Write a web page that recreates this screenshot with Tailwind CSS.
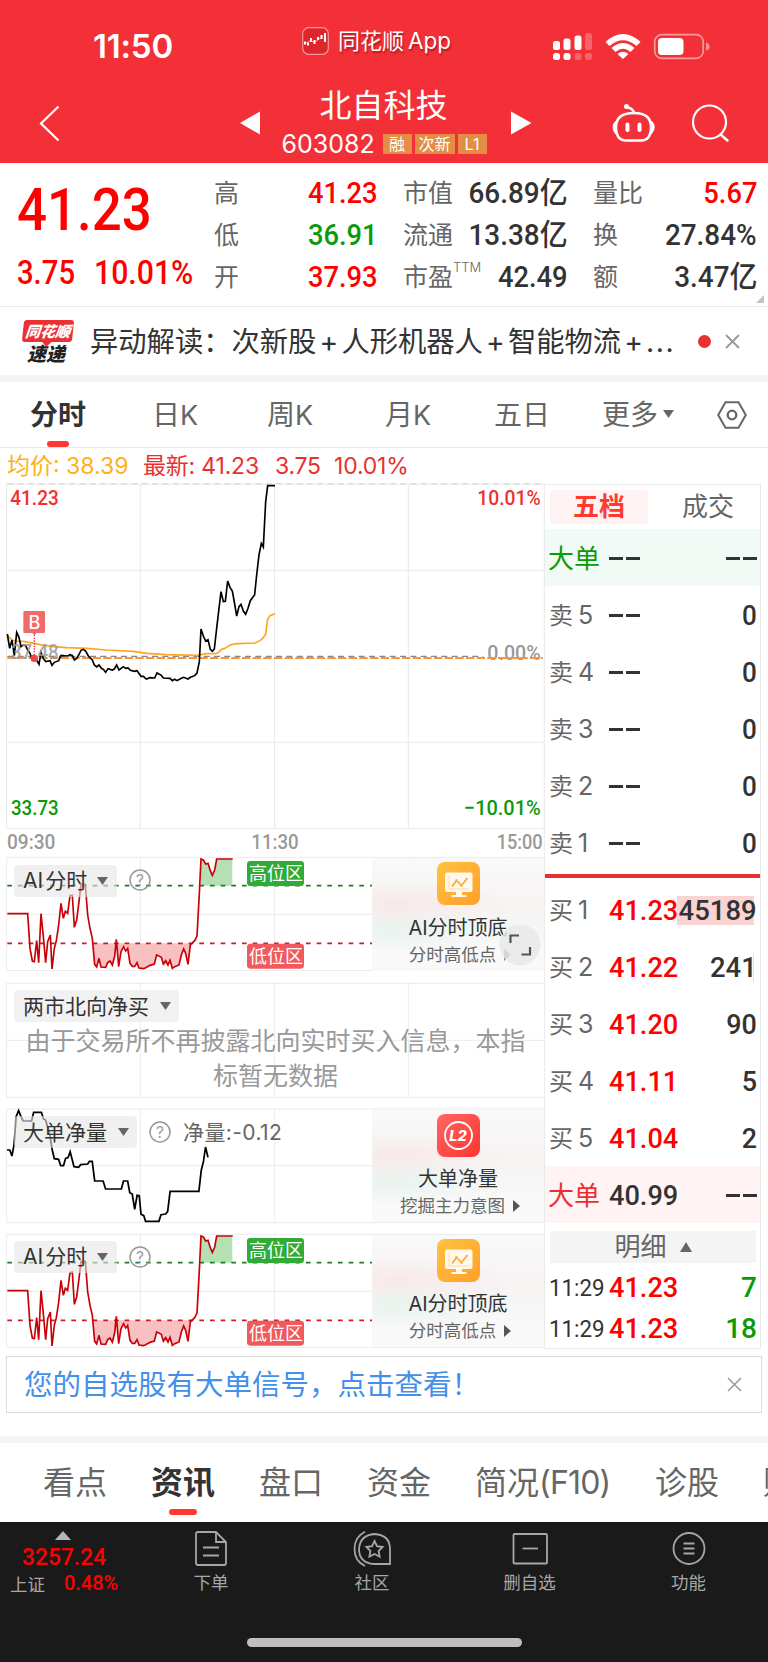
<!DOCTYPE html>
<html lang="zh-CN">
<head>
<meta charset="utf-8">
<title>北自科技 603082</title>
<script src="https://cdn.jsdelivr.net/npm/@tailwindcss/browser@4"></script>
</head>
<body class="w-[768px] h-[1662px] overflow-hidden bg-white font-['Inter','Noto_Sans_CJK_SC',sans-serif] text-[#666] leading-none whitespace-nowrap">

<!-- shared drawings -->
<svg class="absolute w-0 h-0" aria-hidden="true">
  <defs>
    <linearGradient id="amber" x1="0" y1="0" x2="1" y2="1"><stop offset="0" stop-color="#ffc340"/><stop offset="1" stop-color="#ff9f2a"/></linearGradient>
    <linearGradient id="coral" x1="0" y1="0" x2="1" y2="1"><stop offset="0" stop-color="#ff6663"/><stop offset="1" stop-color="#ff3530"/></linearGradient>
    <symbol id="ai-icon" viewBox="0 0 43 43">
      <rect width="43" height="43" rx="8" fill="url(#amber)"/>
      <rect x="8" y="10.500" width="27.500" height="19.500" rx="2" fill="#fff8ec"/>
      <path d="M19 30h6v3h4.500v2h-15v-2H19z" fill="#fff8ec"/>
      <path d="M12 14v13h20" fill="none" stroke="#ffd9a0" stroke-width="1"/>
      <path d="M15 24.500l4.500-6 5 5 6-7.500" fill="none" stroke="#ff9f2a" stroke-width="1.500"/>
      <circle cx="19.500" cy="18.500" r="1.500" fill="#ffb347"/><circle cx="24.500" cy="23.500" r="1.500" fill="#ffb347"/>
    </symbol>
    <symbol id="ai-chart" viewBox="0 0 1635 348">
      <path d="M20 7H1635M20 178H1635M421 7V349M824 7V349M1229 7V349M20 7V349" fill="none" stroke="#ebebeb" stroke-width="3"/>
      <path d="M603 92V12L617 27 624 25 637 61 644 45 650 12H697V92z" fill="#b5e0b3"/>
      <path d="M278 265L284 328 290 336 297 310 303 336 317 337 330 318 337 330 344 303 349 265 356 335 363 290 371 275 383 280 390 325 404 334 411 323 417 339 430 341 463 327 470 300 484 307 490 327 504 330 510 316 517 340 537 330 551 282 564 328 571 265z" fill="#f8c0c1"/>
      <path d="M22 92H1230" stroke="#1d7f23" stroke-width="5" stroke-dasharray="14 18"/>
      <path d="M22 265H1230" stroke="#cf1b20" stroke-width="5" stroke-dasharray="14 18"/>
      <path d="M22 176L83 176 90 280 97 318 103 320 110 257 116 323 123 176 130 245 137 323 143 260 151 240 156 342 163 280 169 257 176 210 183 145 190 190 196 169 203 175 210 122 217 120 223 217 230 195 237 140 243 88 256 88 263 180 270 220 277 250 284 328 290 336 297 310 303 336 317 337 323 323 330 318 337 330 344 303 349 253 356 335 363 290 371 275 377 288 383 280 390 325 397 334 404 334 411 323 417 339 430 341 437 338 450 331 463 327 470 300 484 307 490 327 497 317 504 330 510 316 517 340 524 335 537 330 544 300 551 282 557 295 564 328 571 270 584 257 591 243 598 115 603 12 610 15 617 27 624 25 631 47 637 61 644 45 650 12 698 12" fill="none" stroke="#c90008" stroke-width="5"/>
      <rect x="741" y="18" width="171" height="75" rx="10" fill="#30ac36"/>
      <rect x="741" y="266" width="171" height="75" rx="10" fill="#f05a5d"/>
      <g fill="#fff" font-size="54" font-family="'Noto Sans CJK SC',sans-serif"><text x="747" y="76">高位区</text><text x="747" y="324">低位区</text></g>
    </symbol>
  </defs>
</svg>

<header class="h-[163px] bg-[#f33038] text-white flex flex-col">
  <div class="h-[84px] flex items-center relative">
    <div class="w-[302px] pl-[93px] pt-[9px] text-[33px] font-semibold tracking-[-0.2px]">11:50</div>
    <svg class="w-[27px] h-[28px] -mt-[3px]" viewBox="0 0 27 28"><rect x=".7" y=".7" width="25.600" height="26.600" rx="6" fill="#dd252c" stroke="#f7969a" stroke-width="1.200"/><path d="M3 17.500v-3M6 18.500v-3M9 15v-4M12.500 17v-4M16 13v-3M19.500 12V8M23 15V6" stroke="#fff" stroke-width="2"/><path d="M2 17l6-3 5 1 8-6" fill="none" stroke="#fff" stroke-width=".6"/></svg>
    <div class="w-[215px] pl-[9px] -mt-[2px] text-[22px] [text-shadow:1px_2px_2px_rgba(120,0,0,.55)]">同花顺<span class="ml-1 text-[22.500px]">App</span></div>
    <svg class="w-[168px] h-[30px] mt-2" viewBox="544 30 168 30">
      <g fill="#fff"><rect x="553" y="40" width="7" height="9" rx="2.500"/><rect x="563.500" y="37.500" width="7" height="11.500" rx="2.500"/><rect x="574.500" y="34.500" width="7" height="14.500" rx="2.500"/><rect x="553" y="52" width="7" height="7" rx="2.500"/><rect x="563.500" y="52" width="7" height="7" rx="2.500"/></g>
      <g fill="#fff" opacity=".25"><rect x="585" y="32" width="7" height="17" rx="2.500"/><rect x="574.500" y="52" width="7" height="7" rx="2.500"/><rect x="585" y="52" width="7" height="7" rx="2.500"/></g>
      <path d="M605.500 41Q623 25 640.500 41L636.500 45Q623 33.500 609.500 45zM611.500 47Q623 37 634.500 47L630.500 51Q623 44.500 615.500 51zM617.500 53Q623 48.500 628.500 53L623 58z" fill="#fff"/>
      <rect x="654.700" y="33.700" width="48.500" height="23.600" rx="7" fill="none" stroke="#f9999c" stroke-width="1.700"/><rect x="658" y="37" width="25.500" height="17" rx="4" fill="#fff"/><path d="M706 41.500q3.500 1 3.500 4t-3.500 4z" fill="#f9999c"/>
    </svg>
  </div>
  <div class="h-[79px] flex items-start">
    <svg class="w-[260px] h-[60px]" viewBox="0 84 260 60"><path d="M58.500 106.500L41 123.500 58.500 140.500" fill="none" stroke="#fff" stroke-width="2.200"/><path d="M260 111.500V134.500L240 123z" fill="#fff"/></svg>
    <div class="w-[251px] flex flex-col items-center">
      <div class="h-[42px] pt-[6px] text-[32px] -ml-1">北自科技</div>
      <div class="h-[36px] flex items-center gap-[3px] text-[16px] -ml-[3px]">
        <span class="text-[25px] mr-[6px] w-[92px]">603082</span>
        <span class="bg-[#e38d45] w-[29px] h-5 flex items-center justify-center">融</span><span class="bg-[#e38d45] w-10 h-5 flex items-center justify-center">次新</span><span class="bg-[#e38d45] w-[29px] h-5 flex items-center justify-center">L1</span>
      </div>
    </div>
    <svg class="w-[257px] h-[70px]" viewBox="511 84 257 70"><path d="M511 111.500V134.500L531.500 123z" fill="#fff"/>
      <g fill="none" stroke="#fff" stroke-width="2.500" stroke-linecap="round"><path d="M634 113Q616 113 616 127Q616 140.500 626 140.500H641Q651 140.500 651 127Q651 113 634 113zM616 122Q611.500 127 616 133M651 122Q656 127 651 133"/><path d="M634 113Q633 108 627 107.500" /><path d="M627.500 124.500v5.500M639.500 124.500v5.500" stroke-width="4"/><circle cx="709.500" cy="122" r="16.500" stroke-width="2.200"/><path d="M720.500 134.500L727.500 140.500" stroke-width="2.500"/></g><circle cx="626.500" cy="106.500" r="2.500" fill="#fff"/>
    </svg>
  </div>
</header>

<!-- quote summary -->
<section class="h-[144px] border-b border-[#e9e9e9] flex pt-[9px] relative">
  <div class="w-[214px] pl-[17px] text-[#fe0000] font-['Roboto'] font-medium">
    <div class="h-[73px] pt-[8px] text-[60px] origin-left scale-x-[.88]">41.23</div>
    <div class="flex pt-[12px] text-[32.500px]"><span class="w-[77px] origin-left scale-x-[.9]">3.75</span><span class="origin-left scale-x-[.93]">10.01%</span></div>
  </div>
  <div class="w-[164px] text-[25px]">
    <div class="h-[42px] flex items-center justify-between"><span>高</span><span class="font-['Roboto'] font-medium text-[30px] text-[#fe0000] origin-right scale-x-[.91]">41.23</span></div>
    <div class="h-[42px] flex items-center justify-between"><span>低</span><span class="font-['Roboto'] font-medium text-[30px] text-[#0a9a0a] origin-right scale-x-[.91]">36.91</span></div>
    <div class="h-[42px] flex items-center justify-between"><span>开</span><span class="font-['Roboto'] font-medium text-[30px] text-[#fe0000] origin-right scale-x-[.91]">37.93</span></div>
  </div>
  <div class="ml-[25px] w-[165px] text-[25px]">
    <div class="h-[42px] flex items-center justify-between"><span>市值</span><span class="font-['Roboto','Noto_Sans_CJK_SC'] font-medium text-[30px] text-[#333] origin-right scale-x-[.93]">66.89亿</span></div>
    <div class="h-[42px] flex items-center justify-between"><span>流通</span><span class="font-['Roboto','Noto_Sans_CJK_SC'] font-medium text-[30px] text-[#333] origin-right scale-x-[.93]">13.38亿</span></div>
    <div class="h-[42px] flex items-center justify-between"><span class="relative">市盈<sup class="absolute left-full top-[-4px] text-[13px] leading-none font-light">TTM</sup></span><span class="font-['Roboto'] font-medium text-[30px] text-[#333] origin-right scale-x-[.91]">42.49</span></div>
  </div>
  <div class="ml-[25px] w-[164px] text-[25px]">
    <div class="h-[42px] flex items-center justify-between"><span>量比</span><span class="font-['Roboto'] font-medium text-[30px] text-[#fe0000] origin-right scale-x-[.91]">5.67</span></div>
    <div class="h-[42px] flex items-center justify-between"><span>换</span><span class="font-['Roboto'] font-medium text-[30px] text-[#333] origin-right scale-x-[.93]">27.84%</span></div>
    <div class="h-[42px] flex items-center justify-between"><span>额</span><span class="font-['Roboto','Noto_Sans_CJK_SC'] font-medium text-[30px] text-[#333] origin-right scale-x-[.93]">3.47亿</span></div>
  </div>
  <svg class="absolute right-1 bottom-[3px] w-2 h-2" viewBox="0 0 8 8"><path d="M8 0V8H0z" fill="#c4c4c4"/></svg>
</section>

<!-- news strip -->
<section class="h-[75px] border-b-[7px] border-[#f4f4f4] flex items-center">
  <div class="ml-[23px] w-[67px] flex flex-col font-black italic text-[17px]">
    <span class="relative w-[50px] h-[22px] rounded-[3px] -skew-x-6 bg-[#eb2f33] text-white flex items-center justify-center text-[15px]">同花顺<i class="absolute left-[21px] -bottom-[3px] w-2 h-2 rotate-45 bg-[#eb2f33] -z-10"></i></span>
    <span class="h-[21px] pt-[3px] pl-[4px] text-[19px] text-[#222]">速递</span>
  </div>
  <div class="w-[608px] pt-[2px] text-[28.300px] text-[#333]">异动解读：次新股<span class="inline-block w-[25px] text-center">+</span>人形机器人<span class="inline-block w-[25px] text-center">+</span>智能物流<span class="inline-block w-[25px] text-center">+</span><span class="tracking-[1.500px]">...</span></div>
  <i class="w-[13px] h-[13px] rounded-full bg-[#eb2f33]"></i>
  <svg class="ml-[14px] w-[15px] h-[15px]" viewBox="0 0 15 15"><path d="M1 1L14 14M14 1L1 14" stroke="#999" stroke-width="1.800"/></svg>
</section>

<!-- period tabs -->
<nav class="h-[66px] border-b border-[#e9e9e9] flex items-center pl-[30px] text-[28px]">
  <div class="w-[122px] relative font-bold text-[#333]">分时<i class="absolute left-[17px] top-[40px] w-[22px] h-[6px] rounded-[3px] bg-[#ff3930]"></i></div>
  <div class="w-[115px]">日<span class="text-[27px]">K</span></div>
  <div class="w-[118px]">周<span class="text-[27px]">K</span></div>
  <div class="w-[109px]">月<span class="text-[27px]">K</span></div>
  <div class="w-[108px]">五日</div>
  <div class="w-[115px] flex items-center gap-[5px]">更多<svg class="w-[11px] h-[9px]" viewBox="0 0 11 9"><path d="M0 0H11L5.500 8z" fill="#666"/></svg></div>
  <svg class="w-[30px] h-[28px]" viewBox="0 0 30 28"><path d="M8.500 1.300H21.500L28.800 14 21.500 26.700H8.500L1.200 14z" fill="none" stroke="#666" stroke-width="2"/><circle cx="15" cy="14" r="4.300" fill="none" stroke="#666" stroke-width="2.300"/></svg>
</nav>

<div class="h-[32px] pt-1 flex items-center pl-[7px] text-[23px] text-[#e93030]"><span class="w-[136px] text-[#ffb013]">均价: 38.39</span><span class="w-[132px] tracking-[-.2px]">最新: 41.23</span><span class="w-[59px] tracking-[-.3px]">3.75</span><span class="tracking-[-.2px]">10.01%</span></div>

<div class="flex h-[869px]">
  <!-- chart column -->
  <div class="w-[545px] flex flex-col">
    <svg class="block w-[545px] h-[375px]" viewBox="0 0 1635 1125">
      <path d="M20 13H1634M20 271H1634M20 787H1634M20 1045H1634M20 13V1045M421 13V1045M824 13V1045M1225 13V1045M1633 13V1125" fill="none" stroke="#e8e8e8" stroke-width="3"/>
      <path d="M22 11H1630" stroke="#ead9c4" stroke-width="4" stroke-dasharray="18 13"/>
      <g font-family="Roboto" font-size="63" font-weight="500">
        <text x="31" y="74" fill="#f03030" textLength="145" lengthAdjust="spacingAndGlyphs">41.23</text>
        <text x="1432" y="74" fill="#f03030" textLength="190" lengthAdjust="spacingAndGlyphs">10.01%</text>
        <text x="1462" y="540" fill="#999" textLength="160" lengthAdjust="spacingAndGlyphs">0.00%</text>
        <text x="33" y="1005" fill="#0a9a0a" textLength="143" lengthAdjust="spacingAndGlyphs">33.73</text>
        <text x="1392" y="1005" fill="#0a9a0a" textLength="230" lengthAdjust="spacingAndGlyphs">−10.01%</text>
        <g fill="#999"><text x="21" y="1107" textLength="145" lengthAdjust="spacingAndGlyphs">09:30</text><text x="754" y="1107" textLength="142" lengthAdjust="spacingAndGlyphs">11:30</text><text x="1490" y="1107" textLength="138" lengthAdjust="spacingAndGlyphs">15:00</text></g>
      </g>
      <path d="M22 529H1450" stroke="#888" stroke-width="4" stroke-dasharray="18 13"/>
      <path d="M22 534H1628" stroke="#ff9138" stroke-width="6" stroke-dasharray="25 7"/>
      <path d="M22 466L36 480 50 484 70 484 90 488 120 494 160 500 200 503 260 505 320 510 400 514 440 520 500 524 590 526 620 521 650 520 658 515 665 508 675 505 690 495 710 491 765 489 780 482 790 473 797 462 803 418 810 407 825 401" fill="none" stroke="#ffa51f" stroke-width="5"/>
      <path d="M22 462L29 505 36 480 43 527 50 457 57 472 63 500 70 495 77 497 83 510 90 520 97 540 103 535 110 540 117 553 123 517 130 535 137 545 150 542 156 556 163 547 176 542 183 526 203 528 210 524 217 526 223 540 230 535 236 525 243 511 250 508 257 513 265 528 277 540 283 555 290 561 297 555 304 565 310 568 317 577 324 566 337 570 343 567 350 555 357 570 370 560 377 565 384 564 391 571 404 574 411 572 423 589 430 589 439 597 450 593 464 594 471 579 484 586 490 594 510 595 517 602 524 598 531 602 544 595 551 592 564 597 571 592 584 587 591 579 598 545 603 447 610 468 617 483 624 479 631 508 637 514 643 507 650 445 657 385 663 335 670 365 676 364 683 303 690 322 697 333 704 372 710 408 717 380 723 373 730 393 737 403 744 385 751 362 764 344 770 285 777 225 784 190 790 201 797 65 803 17 825 17" fill="none" stroke="#000" stroke-width="5"/>
      <text x="33" y="538" font-family="Roboto" font-size="63" font-weight="500" fill="#999" fill-opacity=".85" textLength="143" lengthAdjust="spacingAndGlyphs">37.48</text>
      <path d="M103 465V530" stroke="#f03040" stroke-width="4" stroke-dasharray="4 4"/><circle cx="103" cy="535" r="11" fill="#ef4444"/>
      <path d="M74 393H132Q135 393 135 397V455Q135 459 132 459H110L103 466 96 459H74Q70 459 70 455V397Q70 393 74 393z" fill="#f16a6c"/>
      <text x="103" y="446" text-anchor="middle" font-family="Inter" font-size="54" font-weight="500" fill="#fff">B</text>
    </svg>

    <div class="h-[126px] relative border-r border-[#ebebeb]">
      <svg class="block w-[545px] h-[116px]" viewBox="0 0 1635 348"><use href="#ai-chart" width="1635" height="348"/><path d="M20 347H1635" stroke="#ebebeb" stroke-width="3"/></svg>
      <div class="absolute left-[14px] top-[10px] w-[103px] h-8 rounded bg-[#e6e6e6]/60 text-[#333] text-[21px] flex items-center pl-[9px]"><span class="w-[63px] -mt-[2px]">AI<span class="ml-[2px]">分时</span></span><svg class="ml-[11px] w-[11px] h-[8px]" viewBox="0 0 11 8"><path d="M0 0H11L5.500 8z" fill="#666"/></svg></div>
      <svg class="absolute left-[129px] top-[14px] w-[22px] h-[22px]" viewBox="0 0 22 22"><circle cx="11" cy="11" r="10" fill="none" stroke="#999" stroke-width="1.500"/><text x="11" y="16.500" text-anchor="middle" font-family="Inter" font-size="15.500" fill="#999">?</text></svg>
      <div class="absolute left-[372px] top-[3px] w-[172px] h-[113px] flex flex-col items-center bg-[radial-gradient(ellipse_110px_22px_at_15%_40%,#f8e9e9,transparent),radial-gradient(ellipse_100px_26px_at_12%_62%,#e9f3ee,transparent),linear-gradient(180deg,#f9f9f9_0%,#f7f3f3_45%,#f4f7f5_60%,#f9f9f9_85%)]">
        <svg class="mt-[4px] w-[43px] h-[43px]"><use href="#ai-icon" width="43" height="43"/></svg>
        <div class="mt-[13px] text-[20px] text-[#333]">AI分时顶底</div>
        <div class="mt-[8px] text-[17.500px] flex items-center gap-[8px] ml-1">分时高低点<svg class="w-[7px] h-[12px]" viewBox="0 0 7 12"><path d="M0 0L7 6 0 12z" fill="#888"/></svg></div>
      </div>
      <svg class="absolute left-[499px] top-[69px] w-[42px] h-[42px]" viewBox="0 0 42 42"><circle cx="21" cy="21" r="20.500" fill="#e8e8e8" fill-opacity=".82"/><path d="M11.500 19V11.500H20M31 23V30.500H22.500" fill="none" stroke="#555" stroke-width="2.200"/></svg>
    </div>

    <div class="h-[126px] relative border-r border-[#ebebeb]">
      <svg class="block w-[545px] h-[118px]" viewBox="0 0 1635 354"><path d="M20 7H1635M20 178H1635M20 349H1635M20 7V349M421 7V349M824 7V349M1225 7V349" fill="none" stroke="#ebebeb" stroke-width="3"/></svg>
      <div class="absolute left-[14px] top-[9px] w-[165px] h-8 rounded bg-[#f1f1f1] text-[#333] text-[21px] flex items-center pl-[9px]">两市北向净买<svg class="ml-[11px] w-[11px] h-[8px]" viewBox="0 0 11 8"><path d="M0 0H11L5.500 8z" fill="#666"/></svg></div>
      <div class="absolute left-[7px] top-[43px] w-[537px] text-center text-[25px] leading-[35px] text-[#999]">由于交易所不再披露北向实时买入信息，本指<br>标暂无数据</div>
    </div>

    <div class="h-[125px] relative border-r border-[#ebebeb]">
      <svg class="block w-[545px] h-[118px]" viewBox="0 0 1635 354"><path d="M20 6H1635M20 176H1635M20 347H1635M20 6V347M421 6V347M824 6V347" fill="none" stroke="#ebebeb" stroke-width="3"/>
        <path transform="scale(1.0522 1) translate(0 -21)" d="M20 150L28 150 34 168 40 135 46 50 53 32 60 50 66 63 90 63 96 37 118 37 124 57 130 60 142 105 149 150 155 176 167 178 173 197 181 197 187 175 194 173 200 155 211 200 224 202 230 194 250 192 255 184 263 184 270 243 294 243 301 267 346 267 352 243 364 243 370 278 377 282 384 328 391 286 397 287 402 343 410 347 415 364 453 364 459 344 472 342 478 335 485 274 567 274 574 210 580 185 586 141 593 172" fill="none" stroke="#000" stroke-width="5"/></svg>
      <div class="absolute left-[14px] top-[9px] w-[123px] h-8 rounded bg-[#e6e6e6]/60 text-[#333] text-[21px] flex items-center pl-[9px]">大单净量<svg class="ml-[11px] w-[11px] h-[8px]" viewBox="0 0 11 8"><path d="M0 0H11L5.500 8z" fill="#666"/></svg></div>
      <svg class="absolute left-[149px] top-[14px] w-[22px] h-[22px]" viewBox="0 0 22 22"><circle cx="11" cy="11" r="10" fill="none" stroke="#999" stroke-width="1.500"/><text x="11" y="16.500" text-anchor="middle" font-family="Inter" font-size="15.500" fill="#999">?</text></svg>
      <div class="absolute left-[183px] top-[15px] text-[21px] tracking-[.4px]">净量:-0.12</div>
      <div class="absolute left-[372px] top-[3px] w-[172px] h-[112px] flex flex-col items-center bg-[radial-gradient(ellipse_110px_22px_at_15%_40%,#f8e9e9,transparent),radial-gradient(ellipse_100px_26px_at_12%_62%,#e9f3ee,transparent),linear-gradient(180deg,#f9f9f9_0%,#f7f3f3_45%,#f4f7f5_60%,#f9f9f9_85%)]">
        <svg class="mt-[4px] w-[43px] h-[43px]" viewBox="0 0 43 43"><rect width="43" height="43" rx="8" fill="url(#coral)"/><circle cx="21.500" cy="21.500" r="13.500" fill="none" stroke="#fff" stroke-width="1.800"/><text x="21" y="26.800" text-anchor="middle" font-family="Inter" font-style="italic" font-weight="800" font-size="14.500" fill="#fff">L2</text></svg>
        <div class="mt-[12px] text-[20px] text-[#333]">大单净量</div>
        <div class="mt-[8px] text-[17.500px] flex items-center gap-[8px] ml-1">挖掘主力意图<svg class="w-[7px] h-[12px]" viewBox="0 0 7 12"><path d="M0 0L7 6 0 12z" fill="#555"/></svg></div>
      </div>
    </div>

    <div class="h-[117px] relative border-r border-[#ebebeb]">
      <svg class="block w-[545px] h-[116px]" viewBox="0 0 1635 348"><use href="#ai-chart" width="1635" height="348"/><path d="M20 347H1635" stroke="#ebebeb" stroke-width="3"/></svg>
      <div class="absolute left-[14px] top-[9px] w-[103px] h-8 rounded bg-[#e6e6e6]/60 text-[#333] text-[21px] flex items-center pl-[9px]"><span class="w-[63px] -mt-[1px]">AI<span class="ml-[2px]">分时</span></span><svg class="ml-[11px] w-[11px] h-[8px]" viewBox="0 0 11 8"><path d="M0 0H11L5.500 8z" fill="#666"/></svg></div>
      <svg class="absolute left-[129px] top-[14px] w-[22px] h-[22px]" viewBox="0 0 22 22"><circle cx="11" cy="11" r="10" fill="none" stroke="#999" stroke-width="1.500"/><text x="11" y="16.500" text-anchor="middle" font-family="Inter" font-size="15.500" fill="#999">?</text></svg>
      <div class="absolute left-[372px] top-[3px] w-[172px] h-[112px] flex flex-col items-center bg-[radial-gradient(ellipse_110px_22px_at_15%_40%,#f8e9e9,transparent),radial-gradient(ellipse_100px_26px_at_12%_62%,#e9f3ee,transparent),linear-gradient(180deg,#f9f9f9_0%,#f7f3f3_45%,#f4f7f5_60%,#f9f9f9_85%)]">
        <svg class="mt-[4px] w-[43px] h-[43px]"><use href="#ai-icon" width="43" height="43"/></svg>
        <div class="mt-[12px] text-[20px] text-[#333]">AI分时顶底</div>
        <div class="mt-[8px] text-[17.500px] flex items-center gap-[8px] ml-1">分时高低点<svg class="w-[7px] h-[12px]" viewBox="0 0 7 12"><path d="M0 0L7 6 0 12z" fill="#555"/></svg></div>
      </div>
    </div>
  </div>

  <!-- order book -->
  <div class="mt-1 w-[216px] h-[865px] border-t border-r border-b border-[#e8e8e8] text-[24px] flex flex-col">
    <div class="h-[44px] shrink-0 flex items-center pl-[5px] text-[26px]"><div class="w-[98px] h-[34px] shrink-0 rounded bg-[#fff2f2] text-[#ff3a30] font-bold flex items-center justify-center">五档</div><div class="w-[112px] pl-[8px] shrink-0 text-center">成交</div></div>
    <div class="h-[57px] shrink-0 flex items-center pt-[2px] pl-[3px] pr-[3px] bg-[#f2faf6]"><span class="w-[61px] text-[26px] text-[#0a9a0a]">大单</span><span class="flex gap-[3px]"><i class="w-[14px] h-[3px] bg-[#333]"></i><i class="w-[14px] h-[3px] bg-[#333]"></i></span><span class="ml-auto flex gap-[3px]"><i class="w-[14px] h-[3px] bg-[#333]"></i><i class="w-[14px] h-[3px] bg-[#333]"></i></span></div>
    <div class="h-[57px] shrink-0 flex items-center pt-[2px] pl-[4px] pr-[3px]"><span class="w-[29px]">卖</span><span class="w-[31px] text-[25px]">5</span><span class="flex gap-[3px]"><i class="w-[14px] h-[3px] bg-[#333]"></i><i class="w-[14px] h-[3px] bg-[#333]"></i></span><span class="ml-auto font-['Roboto'] font-medium text-[28px] text-[#333] origin-right scale-x-[.93]">0</span></div>
    <div class="h-[57px] shrink-0 flex items-center pt-[2px] pl-[4px] pr-[3px]"><span class="w-[29px]">卖</span><span class="w-[31px] text-[25px]">4</span><span class="flex gap-[3px]"><i class="w-[14px] h-[3px] bg-[#333]"></i><i class="w-[14px] h-[3px] bg-[#333]"></i></span><span class="ml-auto font-['Roboto'] font-medium text-[28px] text-[#333] origin-right scale-x-[.93]">0</span></div>
    <div class="h-[57px] shrink-0 flex items-center pt-[2px] pl-[4px] pr-[3px]"><span class="w-[29px]">卖</span><span class="w-[31px] text-[25px]">3</span><span class="flex gap-[3px]"><i class="w-[14px] h-[3px] bg-[#333]"></i><i class="w-[14px] h-[3px] bg-[#333]"></i></span><span class="ml-auto font-['Roboto'] font-medium text-[28px] text-[#333] origin-right scale-x-[.93]">0</span></div>
    <div class="h-[57px] shrink-0 flex items-center pt-[2px] pl-[4px] pr-[3px]"><span class="w-[29px]">卖</span><span class="w-[31px] text-[25px]">2</span><span class="flex gap-[3px]"><i class="w-[14px] h-[3px] bg-[#333]"></i><i class="w-[14px] h-[3px] bg-[#333]"></i></span><span class="ml-auto font-['Roboto'] font-medium text-[28px] text-[#333] origin-right scale-x-[.93]">0</span></div>
    <div class="h-[60px] shrink-0 flex items-center pl-[4px] pr-[3px] pb-[1px]"><span class="w-[29px]">卖</span><span class="w-[31px] text-[25px]">1</span><span class="flex gap-[3px]"><i class="w-[14px] h-[3px] bg-[#333]"></i><i class="w-[14px] h-[3px] bg-[#333]"></i></span><span class="ml-auto font-['Roboto'] font-medium text-[28px] text-[#333] origin-right scale-x-[.93]">0</span></div>
    <div class="h-[4px] shrink-0 bg-[#e93030]"></div>
    <div class="mt-[3px] h-[57px] shrink-0 flex items-center pt-[2px] pl-[4px] pr-[3px]"><span class="w-[29px]">买</span><span class="w-[31px] text-[25px]">1</span><span class="w-[68px] font-['Roboto'] font-medium text-[28px] text-[#fe0000] origin-left scale-x-[.97]">41.23</span><span class="relative ml-auto w-[80px] h-[29px] flex items-center justify-end bg-[linear-gradient(90deg,#fad3d3_77px,transparent_77px)] font-['Roboto'] font-medium text-[28px] text-[#333]"><span class="origin-right scale-x-[.98]">45189</span></span></div>
    <div class="h-[57px] shrink-0 flex items-center pt-[2px] pl-[4px] pr-[3px]"><span class="w-[29px]">买</span><span class="w-[31px] text-[25px]">2</span><span class="font-['Roboto'] font-medium text-[28px] text-[#fe0000] origin-left scale-x-[.97]">41.22</span><span class="ml-auto h-[29px] flex items-center font-['Roboto'] font-medium text-[28px] text-[#333] bg-[linear-gradient(270deg,transparent_3px,#fad3d3_3px,#fad3d3_4px,transparent_4px)] origin-right scale-x-[.98]">241</span></div>
    <div class="h-[57px] shrink-0 flex items-center pt-[2px] pl-[4px] pr-[3px]"><span class="w-[29px]">买</span><span class="w-[31px] text-[25px]">3</span><span class="font-['Roboto'] font-medium text-[28px] text-[#fe0000] origin-left scale-x-[.97]">41.20</span><span class="ml-auto font-['Roboto'] font-medium text-[28px] text-[#333] origin-right scale-x-[.96]">90</span></div>
    <div class="h-[57px] shrink-0 flex items-center pt-[2px] pl-[4px] pr-[3px]"><span class="w-[29px]">买</span><span class="w-[31px] text-[25px]">4</span><span class="font-['Roboto'] font-medium text-[28px] text-[#fe0000] origin-left scale-x-[.97]">41.11</span><span class="ml-auto font-['Roboto'] font-medium text-[28px] text-[#333] origin-right scale-x-[.96]">5</span></div>
    <div class="h-[57px] shrink-0 flex items-center pt-[2px] pl-[4px] pr-[3px]"><span class="w-[29px]">买</span><span class="w-[31px] text-[25px]">5</span><span class="font-['Roboto'] font-medium text-[28px] text-[#fe0000] origin-left scale-x-[.97]">41.04</span><span class="ml-auto font-['Roboto'] font-medium text-[28px] text-[#333] origin-right scale-x-[.96]">2</span></div>
    <div class="h-[57px] shrink-0 flex items-center pt-[2px] pl-[3px] pr-[3px] bg-[#fff3f3]"><span class="w-[61px] text-[26px] text-[#e93030]">大单</span><span class="font-['Roboto'] font-medium text-[28px] text-[#333] origin-left scale-x-[.97]">40.99</span><span class="ml-auto flex gap-[3px]"><i class="w-[14px] h-[3px] bg-[#333]"></i><i class="w-[14px] h-[3px] bg-[#333]"></i></span></div>
    <div class="mt-[8px] mb-[3px] ml-[5px] w-[206px] h-[32px] shrink-0 bg-[#f4f4f4] text-[26px] flex items-center justify-center gap-[13px]">明细<svg class="w-[12px] h-[10px]" viewBox="0 0 12 10"><path d="M6 0L12 10H0z" fill="#666"/></svg></div>
    <div class="h-[41px] shrink-0 flex items-center pt-[2px] pl-[4px] pr-[3px] font-['Roboto'] font-medium text-[28px]"><span class="w-[60px] text-[24px] font-normal text-[#333] origin-left scale-x-[.93]">11:29</span><span class="text-[#fe0000] origin-left scale-x-[.97]">41.23</span><span class="ml-auto text-[#0a9a0a]">7</span></div>
    <div class="h-[41px] shrink-0 flex items-center pt-[2px] pl-[4px] pr-[3px] font-['Roboto'] font-medium text-[28px]"><span class="w-[60px] text-[24px] font-normal text-[#333] origin-left scale-x-[.93]">11:29</span><span class="text-[#fe0000] origin-left scale-x-[.97]">41.23</span><span class="ml-auto text-[#0a9a0a]">18</span></div>
  </div>
</div>

<!-- signal notice -->
<div class="mt-[7px] ml-[6px] w-[756px] h-[57px] border border-[#dcdcdc] flex items-center justify-between pl-[17px] pr-[19px] text-[28.500px] text-[#448fea]"><span class="pt-[2px]">您的自选股有大单信号，点击查看！</span><svg class="w-[15px] h-[15px]" viewBox="0 0 15 15"><path d="M1 1L14 14M14 1L1 14" stroke="#999" stroke-width="1.500"/></svg></div>

<!-- content tabs -->
<nav class="mt-[23px] h-[86px] border-t-[7px] border-[#f4f4f4] flex items-center pl-[43px] text-[32px] overflow-hidden">
  <div class="w-[108px] shrink-0">看点</div>
  <div class="w-[108px] shrink-0 relative font-bold text-[#333]">资讯<i class="absolute left-[18px] top-[42px] w-[28px] h-[6px] rounded-[3px] bg-[#ff3930]"></i></div>
  <div class="w-[108px] shrink-0">盘口</div>
  <div class="w-[108px] shrink-0">资金</div>
  <div class="w-[180px] shrink-0">简况<span class="text-[32px] tracking-[-.8px]">(F10)</span></div>
  <div class="w-[108px] shrink-0">诊股</div>
  <div class="shrink-0">财</div>
</nav>

<footer class="h-[140px] bg-[#1a1a1a] text-[#a6a6a6] text-[17.500px] flex flex-col">
  <div class="h-[116px] flex pt-[9px]">
    <div class="w-[128px] flex flex-col font-['Roboto','Noto_Sans_CJK_SC']">
      <svg class="ml-[55px] w-[16px] h-[9px]" viewBox="0 0 16 9"><path d="M8 0L16 9H0z" fill="#b5b5b5"/></svg>
      <span class="ml-[22px] mt-[5px] text-[24px] font-medium text-[#fe0000] origin-left scale-x-[.95]">3257.24</span>
      <div class="mt-[4px] pl-[10px] flex items-center"><span class="w-[54px] pt-1">上证</span><span class="text-[21px] font-medium text-[#fe0000] origin-left scale-x-[.95]">0.48%</span></div>
    </div>
    <div class="w-[166px] flex flex-col items-center"><svg class="w-[34px] h-[36px]" viewBox="0 0 34 36" fill="none" stroke="#a6a6a6" stroke-width="1.800"><path d="M2 3Q2 1 4 1H22L32 11V32Q32 34 30 34H4Q2 34 2 32zM22 1V11H32M9 16.500H25M9 24.500H25"/></svg><span class="mt-[7px]">下单</span></div>
    <div class="w-[156px] flex flex-col items-center"><svg class="w-[38px] h-[36px]" viewBox="0 0 38 36" fill="none" stroke="#a6a6a6" stroke-width="1.800"><path d="M37 33H21Q6 32 6 18 7 4 21.500 3 37 4 37 18zM12 .8Q1.500 6 1.500 18T12 35"/><path d="M21.500 10l2.500 5.200 5.600.8-4 4 1 5.700-5.100-2.700-5.100 2.700 1-5.700-4-4 5.600-.8z"/></svg><span class="mt-[7px]">社区</span></div>
    <div class="w-[159px] flex flex-col items-center"><svg class="w-[36px] h-[36px]" viewBox="0 0 36 36" fill="none" stroke="#a6a6a6" stroke-width="1.800"><rect x="1.500" y="3" width="33.500" height="29.500" rx="1"/><path d="M10.500 17.500H26"/></svg><span class="mt-[7px]">删自选</span></div>
    <div class="w-[159px] flex flex-col items-center"><svg class="w-[34px] h-[36px]" viewBox="0 0 34 36" fill="none" stroke="#a6a6a6" stroke-width="1.800"><circle cx="17" cy="17.500" r="15.500"/><path d="M11.500 12.500H22.500M11.500 17.500H22.500M11.500 22.500H22.500"/></svg><span class="mt-[7px]">功能</span></div>
  </div>
  <div class="mx-auto w-[275px] h-[9px] rounded-full bg-[#bfbfbf]"></div>
</footer>
</body>
</html>
